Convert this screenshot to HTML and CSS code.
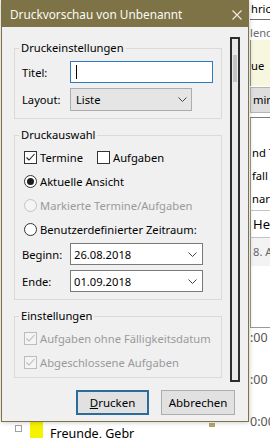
FILE: index.html
```html
<!DOCTYPE html>
<html lang="de">
<head>
  <meta charset="UTF-8">
  <title>Druckvorschau von Unbenannt</title>
  <link rel="stylesheet" href="styles.css">
</head>
<body>

  <!-- Outlook im Hintergrund -->
  <div class="desk">
    <div class="side">
      <div class="s-tab">hric</div>
      <div class="s-cal">lend</div>
      <div class="s-note">ue</div>
      <div class="s-btnrow"><span class="s-btn">mine</span></div>
      <div class="s-list">
        <div class="s-item">nd T</div>
        <div class="s-item">fall</div>
        <div class="s-item">nark</div>
      </div>
      <div class="s-head">He</div>
      <div class="s-day">8. A</div>
      <div class="s-gap"></div>
      <div class="s-hour">:00</div>
      <div class="s-hour">:00</div>
      <div class="s-hour">0:00</div>
    </div>
    <div class="taskrow">
      <span class="t-box"></span>
      <span class="t-color"></span>
      <span class="t-text">Freunde, Gebr</span>
      <span class="t-mark"></span>
    </div>
  </div>

  <!-- Dialog -->
  <div class="dialog">
    <div class="titlebar">
      <span>Druckvorschau von Unbenannt</span>
      <svg class="close" width="10" height="10" viewBox="0 0 10 10">
        <path d="M0.5 0.5 L9.5 9.5 M9.5 0.5 L0.5 9.5" stroke="#efece2" stroke-width="1.1" fill="none"/>
      </svg>
    </div>

    <div class="main">
      <div class="groups">

        <fieldset class="group g1">
          <legend>Druckeinstellungen</legend>
          <div class="field first">
            <label>Titel:</label>
            <div class="textbox"><span class="caret"></span></div>
          </div>
          <div class="field">
            <label>Layout:</label>
            <div class="select">
              <span>Liste</span>
              <svg width="9" height="5" viewBox="0 0 9 5"><path d="M0.5 0.5 L4.5 4.5 L8.5 0.5" stroke="#444" fill="none"/></svg>
            </div>
          </div>
        </fieldset>

        <fieldset class="group g2">
          <legend>Druckauswahl</legend>
          <div class="opt-pair first">
            <div class="opt">
              <span class="cb"><svg width="11" height="11" viewBox="0 0 11 11"><path d="M1.5 5.5 L4 8 L9.5 2" stroke="#222" stroke-width="1.1" fill="none"/></svg></span>
              <span>Termine</span>
            </div>
            <div class="opt">
              <span class="cb"></span>
              <span>Aufgaben</span>
            </div>
          </div>
          <div class="opt"><span class="rb on"></span><span>Aktuelle Ansicht</span></div>
          <div class="opt off"><span class="rb"></span><span>Markierte Termine/Aufgaben</span></div>
          <div class="opt"><span class="rb"></span><span>Benutzerdefinierter Zeitraum:</span></div>
          <div class="field combo-first">
            <label>Beginn:</label>
            <div class="combo">
              <span>26.08.2018</span>
              <svg width="9" height="5" viewBox="0 0 9 5"><path d="M0.5 0.5 L4.5 4.5 L8.5 0.5" stroke="#444" fill="none"/></svg>
            </div>
          </div>
          <div class="field">
            <label>Ende:</label>
            <div class="combo">
              <span>01.09.2018</span>
              <svg width="9" height="5" viewBox="0 0 9 5"><path d="M0.5 0.5 L4.5 4.5 L8.5 0.5" stroke="#444" fill="none"/></svg>
            </div>
          </div>
        </fieldset>

        <fieldset class="group g3">
          <legend>Einstellungen</legend>
          <div class="opt off first">
            <span class="cb"><svg width="11" height="11" viewBox="0 0 11 11"><path d="M1.5 5.5 L4 8 L9.5 2" stroke="#bcbcbc" stroke-width="1.1" fill="none"/></svg></span>
            <span>Aufgaben ohne Fälligkeitsdatum</span>
          </div>
          <div class="opt off">
            <span class="cb"><svg width="11" height="11" viewBox="0 0 11 11"><path d="M1.5 5.5 L4 8 L9.5 2" stroke="#bcbcbc" stroke-width="1.1" fill="none"/></svg></span>
            <span>Abgeschlossene Aufgaben</span>
          </div>
        </fieldset>

      </div>
      <div class="scrollbar"><div class="thumb"></div></div>
    </div>

    <div class="buttons">
      <button class="btn default"><u>D</u>rucken</button>
      <button class="btn">Abbrechen</button>
    </div>
  </div>

</body>
</html>
```

FILE: styles.css
```css
* {
  box-sizing: border-box;
}
body {
  margin: 0;
  width: 270px;
  height: 438px;
  overflow: hidden;
  position: relative;
  background: #fff;
  font-family: "Noto Sans", sans-serif;
  font-size: 11.2px;
  color: #000;
}

/* background window */
.desk {
  display: grid;
  grid-template-columns: 250px 20px;
  grid-template-rows: 422px 16px;
  height: 438px;
  overflow: hidden;
}
.side {
  grid-column: 2;
  grid-row: 1 / 3;
  display: flex;
  flex-direction: column;
  white-space: nowrap;
  overflow: hidden;
}
.side > div {
  flex-shrink: 0;
}
.s-tab {
  height: 20px;
  line-height: 18px;
  padding-left: 1px;
  border-bottom: 1px solid #6d6d6d;
}
.s-cal {
  height: 20px;
  line-height: 26px;
  color: #6a6a6a;
}
.s-note {
  height: 46px;
  padding-top: 18px;
  line-height: 16px;
  background: #f7f7df;
  border-left: 1px solid #8e8e8e;
}
.s-btnrow {
  height: 31px;
  padding-top: 1px;
}
.s-btn {
  display: block;
  height: 26px;
  line-height: 24px;
  padding-left: 2px;
  background: #dedede;
  border: 1px solid #b5b5b5;
  border-right: none;
}
.s-list {
  border-top: 1px solid #7a7a7a;
  border-left: 1px solid #9a9a9a;
  padding-top: 23px;
}
.s-item {
  height: 23px;
  line-height: 23px;
  padding-left: 1px;
}
.s-head {
  height: 28px;
  line-height: 26px;
  font-size: 13px;
  border-top: 1px solid #c3c3c3;
  border-bottom: 1px solid #c3c3c3;
  border-left: 1px solid #9a9a9a;
  padding-left: 2px;
}
.s-day {
  height: 28px;
  line-height: 28px;
  color: #666;
  background: #f3f3f3;
  border-left: 1px solid #9a9a9a;
  padding-left: 2px;
}
.s-gap {
  height: 62px;
  border-left: 1px solid #9a9a9a;
  border-bottom: 1px solid #9a9a9a;
}
.s-hour {
  height: 42px;
  padding-top: 2px;
  line-height: 16px;
  font-size: 12.5px;
  color: #555;
}
.taskrow {
  grid-column: 1;
  grid-row: 2;
  display: flex;
  align-items: flex-start;
  padding-left: 15px;
}
.t-box {
  width: 7px;
  height: 7px;
  margin-top: 3px;
  border: 1px solid #a0a0a0;
}
.t-color {
  width: 13px;
  height: 16px;
  margin-left: 8px;
  background: #f7f200;
}
.t-text {
  margin-left: 7px;
  margin-top: 3px;
  line-height: 18px;
  font-size: 12.5px;
}
.t-mark {
  width: 6px;
  height: 4px;
  margin-left: 75px;
  margin-top: 1px;
  background: #b7a56a;
}

/* dialog */
.dialog {
  position: absolute;
  top: 0;
  left: 1px;
  width: 248px;
  height: 422px;
  display: flex;
  flex-direction: column;
  background: #f0f0f0;
  border: 1px solid #7d7347;
  box-shadow: 0 0 5px rgba(0,0,0,0.25);
}
.titlebar {
  height: 26px;
  display: flex;
  align-items: center;
  justify-content: space-between;
  padding: 0 6px 0 8px;
  background: #7d7347;
  color: #fbfaf4;
  font-size: 11.8px;
}
.close {
  margin-top: 1px;
}
.main {
  display: flex;
  padding-top: 10px;
}
.groups {
  width: 208px;
  margin-left: 12px;
  padding-top: 3px;
}
.scrollbar {
  width: 10px;
  height: 345px;
  margin-left: 8px;
  border: 2px solid #2d2d2d;
  background: #e9e9e9;
}
.thumb {
  width: 4px;
  height: 27px;
  margin: 16px 0 0 1px;
  background: #c4c4c4;
}

.group {
  margin: 0;
  min-width: 0;
  padding: 0 8px 7px 7px;
  border: 1px solid #dadada;
}
.group legend {
  padding: 0 2px;
  margin-left: -3px;
  line-height: 16px;
}
.g2, .g3 {
  margin-top: 8px;
}
.g3 {
  padding-bottom: 3px;
}

.field {
  display: flex;
  align-items: center;
  margin-top: 5px;
}
.field.first {
  margin-top: 5px;
}
.field.combo-first {
  margin-top: 2px;
}
.field label {
  width: 48px;
}
.textbox {
  width: 144px;
  height: 22px;
  padding: 3px 5px;
  background: #fff;
  border: 1px solid #2f7ac0;
}
.caret {
  display: block;
  width: 1px;
  height: 14px;
  background: #000;
}
.select {
  width: 122px;
  height: 23px;
  display: flex;
  align-items: center;
  justify-content: space-between;
  padding: 0 4px 0 5px;
  background: #e5e5e5;
  border: 1px solid #adadad;
}
.combo {
  width: 133px;
  height: 22px;
  display: flex;
  align-items: center;
  justify-content: space-between;
  padding: 0 5px 0 3px;
  background: #fff;
  border: 1px solid #7a7a7a;
}

.opt-pair {
  display: flex;
}
.opt-pair .opt:first-child {
  width: 73px;
}
.first {
  margin-top: 2px;
}
.opt {
  display: flex;
  align-items: center;
  gap: 3px;
  height: 24px;
  padding-left: 2px;
  white-space: nowrap;
}
.opt.off {
  color: #9a9a9a;
}
.cb {
  width: 13px;
  height: 13px;
  flex-shrink: 0;
  background: #fff;
  border: 1px solid #333;
}
.cb svg {
  display: block;
}
.off .cb {
  border-color: #bcbcbc;
  background: #f4f4f4;
}
.rb {
  width: 13px;
  height: 13px;
  flex-shrink: 0;
  display: flex;
  align-items: center;
  justify-content: center;
  border-radius: 50%;
  background: #fff;
  border: 1px solid #333;
}
.rb.on::after {
  content: "";
  width: 7px;
  height: 7px;
  border-radius: 50%;
  background: #1c1c1c;
}
.off .rb {
  border-color: #c4c4c4;
  background: #f4f4f4;
}

.buttons {
  margin-top: auto;
  display: flex;
  justify-content: flex-end;
  gap: 12px;
  padding: 0 13px 6px 0;
}
.btn {
  height: 25px;
  margin: 0;
  padding: 0;
  font-family: inherit;
  font-size: 11.5px;
  color: #000;
  background: #e1e1e1;
  border: 1px solid #adadad;
}
.btn.default {
  width: 73px;
  border: 2px solid #2c6c9c;
}
.btn:not(.default) {
  width: 74px;
}
```
